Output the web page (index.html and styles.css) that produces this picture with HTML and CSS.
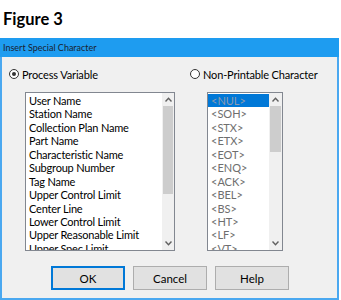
FILE: index.html
```html
<!DOCTYPE html>
<html>
<head>
    <title>Insert Special Character</title>
    <link rel="stylesheet" href="styles.css">
</head>
<body>
    <h1 class="figure">Figure 3</h1>
    <div class="dialog">
        <div class="title-bar">Insert Special Character</div>
        <div class="dialog-body">
            <div class="radio-row">
                <label class="radio radio-left"><span class="dot checked"></span>Process Variable</label>
                <label class="radio radio-right"><span class="dot"></span>Non-Printable Character</label>
            </div>
            <div class="list-row">
                <div class="listbox list-left">
                    <ul class="items">
                        <li>User Name</li>
                        <li>Station Name</li>
                        <li>Collection Plan Name</li>
                        <li>Part Name</li>
                        <li>Characteristic Name</li>
                        <li>Subgroup Number</li>
                        <li>Tag Name</li>
                        <li>Upper Control Limit</li>
                        <li>Center Line</li>
                        <li>Lower Control Limit</li>
                        <li>Upper Reasonable Limit</li>
                        <li>Upper Spec Limit</li>
                    </ul>
                    <div class="scrollbar">
                        <div class="arrow"><svg width="7" height="5" viewBox="0 0 7 5"><polyline points="0.5,4.5 3.5,1.2 6.5,4.5" fill="none" stroke="#606060" stroke-width="1.4"/></svg></div>
                        <div class="track"><div class="thumb thumb-left"></div></div>
                        <div class="arrow"><svg width="7" height="5" viewBox="0 0 7 5"><polyline points="0.5,0.5 3.5,3.8 6.5,0.5" fill="none" stroke="#606060" stroke-width="1.4"/></svg></div>
                    </div>
                </div>
                <div class="listbox list-right">
                    <ul class="items codes">
                        <li class="selected">&lt;NUL&gt;</li>
                        <li>&lt;SOH&gt;</li>
                        <li>&lt;STX&gt;</li>
                        <li>&lt;ETX&gt;</li>
                        <li>&lt;EOT&gt;</li>
                        <li>&lt;ENQ&gt;</li>
                        <li>&lt;ACK&gt;</li>
                        <li>&lt;BEL&gt;</li>
                        <li>&lt;BS&gt;</li>
                        <li>&lt;HT&gt;</li>
                        <li>&lt;LF&gt;</li>
                        <li>&lt;VT&gt;</li>
                    </ul>
                    <div class="scrollbar">
                        <div class="arrow"><svg width="7" height="5" viewBox="0 0 7 5"><polyline points="0.5,4.5 3.5,1.2 6.5,4.5" fill="none" stroke="#606060" stroke-width="1.4"/></svg></div>
                        <div class="track"><div class="thumb thumb-right"></div></div>
                        <div class="arrow"><svg width="7" height="5" viewBox="0 0 7 5"><polyline points="0.5,0.5 3.5,3.8 6.5,0.5" fill="none" stroke="#606060" stroke-width="1.4"/></svg></div>
                    </div>
                </div>
            </div>
            <div class="button-row">
                <button class="btn btn-default">OK</button>
                <button class="btn">Cancel</button>
                <button class="btn">Help</button>
            </div>
        </div>
    </div>
</body>
</html>
```

FILE: styles.css
```css
* {
    margin: 0;
    padding: 0;
    box-sizing: border-box;
}

body {
    background: #ffffff;
    font-family: Lato, 'Noto Sans', sans-serif;
    width: 341px;
    height: 300px;
    overflow: hidden;
}

.figure {
    font-family: Lato, 'Open Sans', sans-serif;
    font-weight: bold;
    font-size: 16.5px;
    line-height: 22px;
    padding: 8px 0 0 3px;
    height: 38px;
    color: #000;
}

.dialog {
    width: 339px;
    height: 262px;
    border: 2px solid #4aa8f0;
    border-top: none;
    background: #f0f0f0;
    display: flex;
    flex-direction: column;
}

.title-bar {
    background: #1e9cf0;
    height: 19px;
    margin: 0 -2px;
    padding-left: 3px;
    font-size: 9px;
    line-height: 19px;
    color: #1a2230;
}

.dialog-body {
    flex: 1;
    display: flex;
    flex-direction: column;
}

.radio-row {
    display: flex;
    height: 35px;
    padding-top: 9px;
    font-size: 11px;
    letter-spacing: -0.15px;
    color: #000;
}

.radio {
    display: flex;
    align-items: center;
    gap: 3px;
    height: 16px;
}

.radio-left {
    margin-left: 7px;
    width: 181px;
}

.dot {
    width: 10px;
    height: 10px;
    border-radius: 50%;
    border: 1px solid #333;
    background: #fff;
    position: relative;
}

.dot.checked::after {
    content: "";
    position: absolute;
    left: 2px;
    top: 2px;
    width: 4px;
    height: 4px;
    border-radius: 50%;
    background: #333;
}

.list-row {
    display: flex;
    height: 159px;
}

.listbox {
    border: 1px solid #828790;
    background: #fff;
    display: flex;
    overflow: hidden;
}

.list-left {
    margin-left: 23px;
    width: 150px;
}

.list-right {
    margin-left: 32px;
    width: 76px;
}

.items {
    list-style: none;
    flex: 1;
    font-size: 11px;
    letter-spacing: -0.2px;
    line-height: 13.45px;
    padding-top: 1px;
    overflow: hidden;
    color: #000;
    white-space: nowrap;
}

.items li {
    height: 13.45px;
    padding-left: 3px;
}

.codes {
    color: #6e6e6e;
    letter-spacing: 0;
}

.codes .selected {
    background: #0078d7;
    color: #8c9bb0;
}

.scrollbar {
    width: 12px;
    background: #f0f0f0;
    display: flex;
    flex-direction: column;
}

.list-right .scrollbar {
    width: 13px;
}

.arrow {
    height: 13px;
    display: flex;
    align-items: center;
    justify-content: center;
}

.track {
    flex: 1;
}

.thumb {
    background: #cdcdcd;
    margin: 0 1px;
}

.thumb-left {
    height: 88px;
}

.thumb-right {
    height: 46px;
}

.button-row {
    display: flex;
    gap: 8px;
    margin-top: 15px;
    padding-left: 49px;
}

.btn {
    width: 74px;
    height: 24px;
    background: #e1e1e1;
    border: 1px solid #adadad;
    font-family: Lato, 'Noto Sans', sans-serif;
    font-size: 11.5px;
    color: #000;
}

.btn-default {
    border: 2px solid #0078d7;
}
```
